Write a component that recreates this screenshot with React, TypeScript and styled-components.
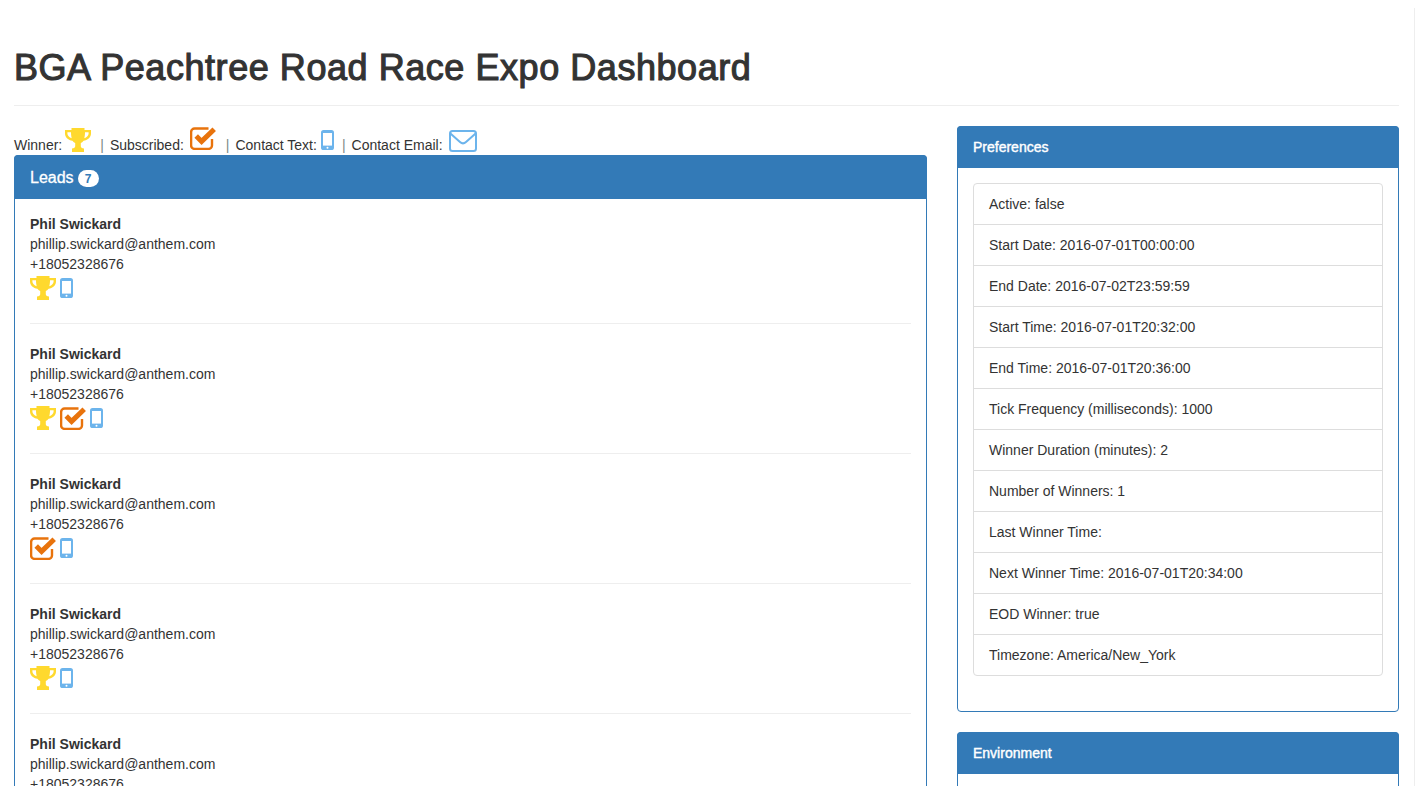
import React from "react";
import styled, { createGlobalStyle } from "styled-components";

const GlobalStyle = createGlobalStyle`
  html, body {
    margin: 0;
    padding: 0;
    background: #fff;
  }
  body {
    font-family: "Liberation Sans", Arial, sans-serif;
    font-size: 14px;
    line-height: 20px;
    color: #333;
  }
`;

const blue = "#337ab7";
const iconBlue = "#6cb4ec";
const orange = "#e8730c";

const Viewport = styled.div`
  position: relative;
  height: 786px;
  overflow: hidden;
  background: #fff;
  width: 1415px;

  &::after {
    content: "";
    position: absolute;
    top: 8px;
    bottom: 0;
    right: 0;
    width: 1px;
    background: #eee;
  }
`;

const Page = styled.div`
  padding: 0 16px 0 14px;
`;

const PageHeader = styled.div`
  padding: 45px 0 15px;
  border-bottom: 1px solid #eee;
  margin-bottom: 20px;
`;

const Title = styled.h1`
  margin: 0;
  font-size: 36px;
  line-height: 45px;
  font-weight: 500;
  letter-spacing: 0.55px;
  -webkit-text-stroke: 1.1px #333;
`;

const Columns = styled.div`
  display: flex;
  align-items: flex-start;
  gap: 30px;
`;

const LeftColumn = styled.div`
  width: 913px;
  flex: none;
`;

const RightColumn = styled.div`
  width: 442px;
  flex: none;
`;

const Legend = styled.div`
  display: flex;
  align-items: flex-end;
  height: 29px;
`;

const LegendLabel = styled.span`
  white-space: pre;
`;

const LegendIcon = styled.span<{ $ml: number; $mr: number; $mb: number }>`
  display: flex;
  margin: 0 ${(p) => p.$mr}px ${(p) => p.$mb}px ${(p) => p.$ml}px;
`;

const Pipe = styled.span`
  color: #7b8a86;
  margin-right: 6px;
`;

const Panel = styled.div<{ $mb?: number }>`
  border: 1px solid ${blue};
  border-radius: 4px;
  background: #fff;
  margin-bottom: ${(p) => p.$mb ?? 0}px;
`;

const PanelHeading = styled.div<{ $tall?: boolean }>`
  background: ${blue};
  color: #fff;
  margin: -1px -1px 0;
  border-radius: 4px 4px 0 0;
  height: ${(p) => (p.$tall ? 44 : 42)}px;
  padding: 0 16px;
  display: flex;
  align-items: center;
  font-weight: 500;
  -webkit-text-stroke: 0.4px #fff;
`;

const LeadsTitle = styled.span`
  font-size: 16px;
  -webkit-text-stroke: 0.3px #fff;
  margin-top: 1px;
`;

const Badge = styled.span`
  display: inline-flex;
  align-items: center;
  justify-content: center;
  width: 21px;
  height: 17px;
  margin: 3px 0 0 4px;
  border-radius: 10px;
  background: #fff;
  color: ${blue};
  font-size: 12px;
  font-weight: 700;
  -webkit-text-stroke: 0;
`;

const LeadList = styled.div`
  padding: 15px 15px 0;
`;

const Lead = styled.div`
  height: 109px;
  margin-bottom: 20px;
  border-bottom: 1px solid #eee;

  &:last-child {
    border-bottom: 0;
  }
`;

const LeadName = styled.div`
  font-weight: 700;
`;

const LeadLine = styled.div``;

const LeadIcons = styled.div`
  display: flex;
  align-items: center;
  gap: 4px;
  height: 26px;
  margin-top: 1px;
`;

const PanelBody = styled.div`
  padding: 15px;
  height: 543px;
  box-sizing: border-box;
`;

const EmptyBody = styled.div`
  height: 60px;
`;

const ListGroup = styled.ul`
  list-style: none;
  margin: 0;
  padding: 0;
  border: 1px solid #ddd;
  border-radius: 4px;
`;

const ListItem = styled.li`
  padding: 10px 15px;
  box-sizing: border-box;
  border-bottom: 1px solid #ddd;
  height: 41px;

  &:last-child {
    border-bottom: 0;
    height: 40px;
  }
`;

const Trophy = () => (
  <svg width="26" height="24" viewBox="0 0 26 24" aria-hidden="true">
    <path
      fill="#ffd92e"
      d="M6.5 0h13v2H26v3.5c0 3.8-3.6 7-7.4 7.3-.9 1.1-1.9 1.8-2.8 2.3v3.1c0 1.3 1 2 3.2 2.3V24H7v-3.5c2.2-.3 3.2-1 3.2-2.3v-3.1c-.9-.5-1.9-1.2-2.8-2.3C3.6 12.5 0 9.3 0 5.5V2h6.5V0zM2.4 4.3v1.2c0 2 1.8 4 4.3 4.7-.4-1.6-.7-3.5-.7-5.9H2.4zm21.2 0H20c0 2.4-.3 4.3-.7 5.9 2.5-.7 4.3-2.7 4.3-4.7V4.3z"
    />
  </svg>
);

const CheckBox = () => (
  <svg width="26" height="23" viewBox="0 0 26 23" aria-hidden="true">
    <path
      fill="none"
      stroke={orange}
      strokeWidth="2.4"
      d="M22 12v6.5c0 1.9-1.6 3.4-3.5 3.4H4.6c-1.9 0-3.5-1.5-3.5-3.4V5c0-1.9 1.6-3.5 3.5-3.5h13.9"
    />
    <path fill="none" stroke={orange} strokeWidth="5" d="M6.2 9l5.4 5.4L24.2 2.2" />
  </svg>
);

const Mobile = () => (
  <svg width="13" height="20" viewBox="0 0 13 20" aria-hidden="true">
    <rect width="13" height="20" rx="2.6" fill={iconBlue} />
    <rect x="2" y="3" width="9" height="12.6" fill="#fff" />
    <circle cx="6.5" cy="17.7" r="1" fill="#fff" />
  </svg>
);

const Envelope = () => (
  <svg width="28" height="22" viewBox="0 0 28 22" aria-hidden="true">
    <rect x="1" y="1" width="26" height="20" rx="2.5" fill="none" stroke={iconBlue} strokeWidth="2" />
    <path d="M1.4 3.5L11 12c1.8 1.6 4.2 1.6 6 0l9.6-8.5" fill="none" stroke={iconBlue} strokeWidth="2" />
  </svg>
);

type LeadData = { winner: boolean; subscribed: boolean };

const leads: LeadData[] = [
  { winner: true, subscribed: false },
  { winner: true, subscribed: true },
  { winner: false, subscribed: true },
  { winner: true, subscribed: false },
  { winner: true, subscribed: false },
];

const prefs = [
  "Active: false",
  "Start Date: 2016-07-01T00:00:00",
  "End Date: 2016-07-02T23:59:59",
  "Start Time: 2016-07-01T20:32:00",
  "End Time: 2016-07-01T20:36:00",
  "Tick Frequency (milliseconds): 1000",
  "Winner Duration (minutes): 2",
  "Number of Winners: 1",
  "Last Winner Time:",
  "Next Winner Time: 2016-07-01T20:34:00",
  "EOD Winner: true",
  "Timezone: America/New_York",
];

export default function App() {
  return (
    <Viewport>
      <GlobalStyle />
      <Page>
        <PageHeader>
          <Title>BGA Peachtree Road Race Expo Dashboard</Title>
        </PageHeader>
        <Columns>
          <LeftColumn>
            <Legend>
              <LegendLabel>Winner:</LegendLabel>
              <LegendIcon $ml={3} $mr={9} $mb={3}><Trophy /></LegendIcon>
              <Pipe>|</Pipe>
              <LegendLabel>Subscribed:</LegendLabel>
              <LegendIcon $ml={6} $mr={10} $mb={5}><CheckBox /></LegendIcon>
              <Pipe>|</Pipe>
              <LegendLabel>Contact Text:</LegendLabel>
              <LegendIcon $ml={4} $mr={8} $mb={5}><Mobile /></LegendIcon>
              <Pipe>|</Pipe>
              <LegendLabel>Contact Email:</LegendLabel>
              <LegendIcon $ml={6} $mr={0} $mb={3}><Envelope /></LegendIcon>
            </Legend>
            <Panel>
              <PanelHeading $tall>
                <LeadsTitle>Leads</LeadsTitle>
                <Badge>7</Badge>
              </PanelHeading>
              <LeadList>
                {leads.map((lead, i) => (
                  <Lead key={i}>
                    <LeadName>Phil Swickard</LeadName>
                    <LeadLine>phillip.swickard@anthem.com</LeadLine>
                    <LeadLine>+18052328676</LeadLine>
                    <LeadIcons>
                      {lead.winner && <Trophy />}
                      {lead.subscribed && <CheckBox />}
                      <Mobile />
                    </LeadIcons>
                  </Lead>
                ))}
              </LeadList>
            </Panel>
          </LeftColumn>
          <RightColumn>
            <Panel $mb={20}>
              <PanelHeading>Preferences</PanelHeading>
              <PanelBody>
                <ListGroup>
                  {prefs.map((p) => (
                    <ListItem key={p}>{p}</ListItem>
                  ))}
                </ListGroup>
              </PanelBody>
            </Panel>
            <Panel>
              <PanelHeading>Environment</PanelHeading>
              <EmptyBody />
            </Panel>
          </RightColumn>
        </Columns>
      </Page>
    </Viewport>
  );
}
